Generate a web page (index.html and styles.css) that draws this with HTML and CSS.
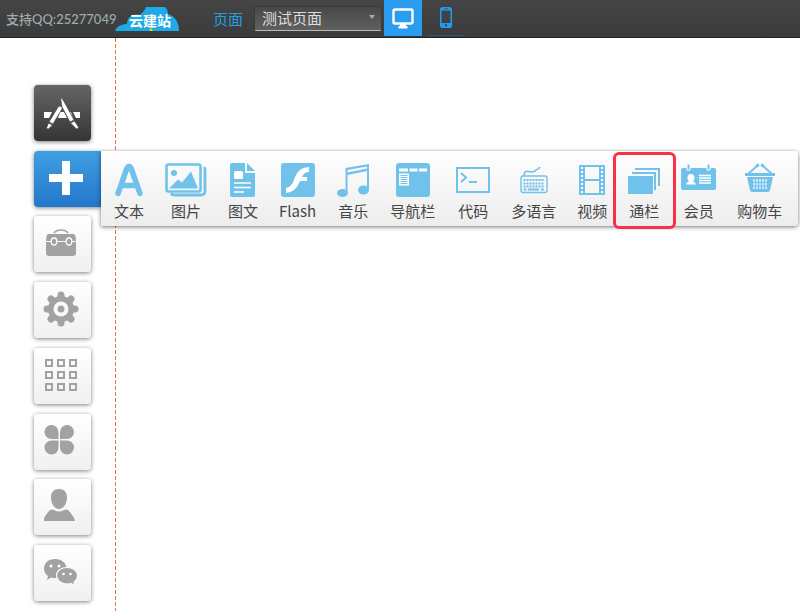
FILE: index.html
```html
<!DOCTYPE html>
<html lang="zh-CN">
<head>
<meta charset="utf-8">
<title>云建站</title>
<link rel="stylesheet" href="styles.css">
</head>
<body>
<header class="topbar">
  <span class="support">支持QQ:25277049</span>
  <a class="logo" href="#">
    <svg class="logo-cloud" viewBox="0 0 64 24" aria-hidden="true"><path fill="#1fa9e6" d="M0 24C2 19 7 17 12 17C12 10 18 6 25 8C28 5 30 3 31 0H50C52 2 53 4 53 7C60 9 64 15 64 24Z"/><path fill="#d8e021" d="M34 24l2-3 2 3z"/></svg>
    <span class="logo-text">云建站</span>
  </a>
  <label class="page-label" for="page">页面</label>
  <div class="select-box">
    <select id="page" class="page-select"><option>测试页面</option></select>
  </div>
  <button class="device device-on" type="button" aria-label="桌面">
    <svg width="22" height="21" viewBox="0 0 22 21"><rect x="1.5" y="1.5" width="19" height="14" rx="1.5" fill="none" stroke="#fff" stroke-width="2.4"/><path fill="#fff" d="M8 16h6v2h1.500v2.500h-9V18H8z"/></svg>
  </button>
  <button class="device" type="button" aria-label="手机">
    <svg width="12" height="21" viewBox="0 0 12 21"><path fill="#1f9df0" fill-rule="evenodd" d="M2.500 0h7Q12 0 12 2.500v16q0 2.500-2.500 2.500h-7Q0 21 0 18.500v-16Q0 0 2.500 0zM1.500 3.500v12.500h9V3.500zM4 1.400v.8h4v-.8zM5 17.300v2h2v-2z"/></svg>
  </button>
</header>
<main class="workspace">
  <nav class="sidebar" aria-label="工具">
    <button class="side side-dark" type="button" aria-label="应用">
      <svg width="36" height="32" viewBox="0 0 36 32"><path fill="#fff" d="M0 14h36v6H0z"/><path fill="#4d4d4d" d="M8 14h4l-4 6H5zM15 14h1l-2 6h-3zM20 14h3l3 6h-3zM27 14h2l3 6h-3z"/><g fill="#fff" stroke="#4d4d4d" stroke-width=".8"><path d="M14 9q2-2 4 0 .500 1 0 2L9 26l-4-2z"/><path d="M4.500 25l4 2-4 4q-2 0-2-1z"/><path d="M16.500 0q1.500 0 2 1l3.500 6 8 15-4 2-8-15z"/><path d="M26.500 25l4-2 4 6q0 2-2 2z"/></g></svg>
    </button>
    <button class="side side-add" type="button" aria-label="添加">
      <svg width="34" height="34" viewBox="0 0 34 34"><path fill="#fff" d="M13 0h8v13h13v8H21v13h-8V21H0v-8h13z"/></svg>
    </button>
    <button class="side" type="button" aria-label="工具箱">
      <svg width="30" height="28" viewBox="0 0 30 28"><path fill="none" stroke="#a2a2a2" stroke-width="1.600" d="M8 4Q10 1 15 1T22 4"/><path fill="#a2a2a2" d="M3 5h24q2 0 2.500 2l.5 5H0l.5-5Q1 5 3 5zM0 13h30v11q0 3-3 3H3q-3 0-3-3z"/><g fill="#a2a2a2" stroke="#fff" stroke-width="1.300"><ellipse cx="8" cy="12.500" rx="2.800" ry="3.500"/><ellipse cx="23" cy="12.500" rx="2.800" ry="3.500"/></g></svg>
    </button>
    <button class="side" type="button" aria-label="设置">
      <svg width="36" height="36" viewBox="-18 -18 36 36"><g stroke="#a2a2a2" stroke-width="7" stroke-linecap="round"><path d="M0-14V14M-14 0H14M-10-10L10 10M10-10L-10 10"/></g><circle r="13" fill="#a2a2a2"/><circle r="7.500" fill="#fafafa"/><circle r="3.500" fill="#a2a2a2"/></svg>
    </button>
    <button class="side" type="button" aria-label="模块">
      <svg width="32" height="32" viewBox="0 0 32 32"><g fill="none" stroke="#a2a2a2" stroke-width="2"><path d="M1 1h6v6H1zM13 1h6v6h-6zM25 1h6v6h-6zM1 13h6v6H1zM13 13h6v6h-6zM25 13h6v6h-6zM1 25h6v6H1zM13 25h6v6h-6zM25 25h6v6h-6z"/></g></svg>
    </button>
    <button class="side" type="button" aria-label="组件">
      <svg width="34" height="32" viewBox="0 0 34 32"><path fill="#a2a2a2" d="M14.500 14H8A7 7 0 1 1 14.500 7zM16 14V7a7 7 0 1 1 6.500 7zM14.500 15.500V22A7 7 0 1 1 8 15.500zM16 15.500h6.500A7 7 0 1 1 16 22z"/></svg>
    </button>
    <button class="side" type="button" aria-label="用户">
      <svg width="36" height="36" viewBox="0 0 36 36"><path fill="#a2a2a2" d="M16 1c5 0 8 3 8 8.500S21 21 16 21 8 15 8 9.500 11 1 16 1zM1 33v-3q3-5 6-8 2-1 4 0 5 3 10 0 2-1 4 0 3 3 6 8l1 3z"/></svg>
    </button>
    <button class="side" type="button" aria-label="微信">
      <svg width="36" height="28" viewBox="0 0 36 28"><path fill="#a2a2a2" d="M12 1c6.500 0 11.500 4 11.500 9.500S18.500 20 12 20q-2 0-4-.5L4 22l1-4Q1 15 1 10.500C1 5 5.500 1 12 1z"/><path fill="#a2a2a2" stroke="#fafafa" stroke-width="1.200" d="M24 9.500c6 0 10.500 3.500 10.500 8 0 3-1.500 5-3.500 6.500l1 3.500-4-2q-2 .500-4 .500c-6 0-10.500-4-10.500-8.500s4.500-8 10.500-8z"/><g fill="#fff"><circle cx="8" cy="8" r="1.500"/><circle cx="16" cy="8" r="1.500"/><circle cx="20.500" cy="16" r="1.300"/><circle cx="27.500" cy="16" r="1.300"/></g></svg>
    </button>
  </nav>
  <section class="canvas">
    <div class="palette">
      <button class="tool" type="button"><svg width="28" height="34" viewBox="0 0 28 34"><path fill="none" stroke="#70c2ea" stroke-width="5.500" stroke-linecap="round" stroke-linejoin="round" d="M3 30.500L12 5Q14 1.500 16 5L25 30.500M7 22.500h14"/></svg>文本</button>
      <button class="tool" type="button"><svg width="42" height="34" viewBox="0 0 42 34"><rect x="1.500" y="1.500" width="34" height="27" rx="2" fill="none" stroke="#70c2ea" stroke-width="2.600"/><path fill="none" stroke="#70c2ea" stroke-width="2.800" d="M38.500 5q1.500 0 1.500 2v21q0 4-4 4H9q-2 0-3-2"/><circle cx="9" cy="10" r="3" fill="#70c2ea"/><path fill="#70c2ea" d="M4 25.500l9-9 4 3 9-11 7 17z"/></svg>图片</button>
      <button class="tool" type="button"><svg width="26" height="34" viewBox="0 0 26 34"><path fill="#70c2ea" d="M2 0h13v10h10v22q0 2-2 2H2q-2 0-2-2V2Q0 0 2 0zM17 0l8 8h-8z"/><rect x="4" y="8" width="9" height="8" rx="1.500" fill="#fff"/><path stroke="#fff" stroke-width="1.600" d="M4 20h17M4 24.500h17M4 29h10"/></svg>图文</button>
      <button class="tool" type="button"><svg width="34" height="34" viewBox="0 0 34 34"><rect width="34" height="34" rx="3" fill="#70c2ea"/><path fill="#fff" d="M28 4v5q-5 0-7 5h5v4h-7Q15 29 5 30v-5q6-.500 9-11Q18 4 28 4z"/></svg>Flash</button>
      <button class="tool" type="button"><svg width="32" height="34" viewBox="0 0 32 34"><path fill="#70c2ea" fill-rule="evenodd" d="M8.500 5L32 1v26h-2V8L10.500 12v18h-2zM10.500 7v2.500L30 5.500V3.500z"/><ellipse cx="5.500" cy="30" rx="5.500" ry="4" fill="#70c2ea"/><ellipse cx="26.500" cy="27" rx="5.500" ry="4.500" fill="#70c2ea"/></svg>音乐</button>
      <button class="tool" type="button"><svg width="34" height="34" viewBox="0 0 34 34"><rect width="34" height="34" rx="3" fill="#70c2ea"/><path fill="#fff" d="M3 5.500h9v3H3zM13.500 5.500h8v3h-8zM23 5.500h8v3h-8zM3 10.500h10v12H3z"/><path stroke="#70c2ea" d="M4.500 12.500h7M4.500 14.500h7M4.500 16.500h7M4.500 18.500h7M4.500 20.500h7"/></svg>导航栏</button>
      <button class="tool" type="button"><svg width="34" height="34" viewBox="0 0 34 34"><rect x="1" y="5" width="32" height="24" fill="none" stroke="#70c2ea" stroke-width="2"/><path fill="none" stroke="#70c2ea" stroke-width="2" d="M5 10l5 4.500L5 19M13 19h8"/></svg>代码</button>
      <button class="tool" type="button"><svg width="28" height="34" viewBox="0 0 28 34"><g fill="none" stroke="#70c2ea"><rect x="1" y="13" width="26" height="16.500" rx="2" stroke-width="1.400"/><path stroke-width="1.600" d="M4 13Q4 7 9 8.500T16 7Q19 6 20 4"/><path stroke-width="1.800" stroke-dasharray="2 1" d="M3.500 17h21M3.500 20.500h21M3.500 23.500h21"/><path stroke-width="1.800" d="M3.500 26.500h3M8 26.500h11M21 26.500h3"/></g></svg>多语言</button>
      <button class="tool" type="button"><svg width="28" height="34" viewBox="0 0 28 34"><path fill="#70c2ea" fill-rule="evenodd" d="M1 2h26v30H1zM7 4v12h14V4zM7 18v12h14V18z"/><path stroke="#fff" stroke-width="2" stroke-dasharray="2 2" d="M4 4v27M24 4v27"/></svg>视频</button>
      <button class="tool tool-marked" type="button"><svg width="32" height="34" viewBox="0 0 32 34"><path fill="#70c2ea" d="M0 13h25v18H0zM4 9h24v18h-2V11H4zM7 5h25v18h-2V7H7z"/></svg>通栏</button>
      <button class="tool" type="button"><svg width="35" height="34" viewBox="0 0 35 34"><path fill="#70c2ea" d="M2 5h31q2 0 2 2v18q0 2-2 2H2q-2 0-2-2V7q0-2 2-2z"/><path fill="#70c2ea" stroke="#fff" d="M6 1h3v6H6zM26 1h3v6h-3z"/><path fill="#fff" d="M10 11q3.500 0 3.500 4 0 2-1.500 3.500 3 1 3 3H5q0-2 3-3-1.500-1.500-1.500-3.500 0-4 3.500-4z"/><path stroke="#fff" stroke-width="1.600" d="M18 12.500h12M18 15h12M18 17.500h12M18 20h12"/></svg>会员</button>
      <button class="tool" type="button"><svg width="32" height="34" viewBox="0 0 32 34"><path fill="none" stroke="#70c2ea" stroke-width="1.800" d="M4 11L13 3M28 11L19 3"/><g fill="#70c2ea"><circle cx="13.500" cy="2.500" r="1.800"/><circle cx="18.500" cy="2.500" r="1.800"/><path d="M1 10h30v3H1zM3 14h26l-3 13q-.500 2-2 2H8q-1.500 0-2-2z"/></g><path stroke="#fff" stroke-width="1.300" d="M10 16v10M13 16v10M16 16v10M19 16v10M22 16v10"/><path stroke="#70c2ea" d="M8 19.500h16M8 23h16"/></svg>购物车</button>
    </div>
  </section>
</main>
</body>
</html>
```
FILE: styles.css
```css
* { box-sizing: border-box; }

body {
  margin: 0;
  min-height: 100vh;
  display: flex;
  flex-direction: column;
  background: #fff;
  font-family: "Noto Sans CJK SC", sans-serif;
}

button {
  margin: 0;
  padding: 0;
  border: 0;
  font: inherit;
  cursor: pointer;
}

svg { display: block; flex: none; }

.topbar {
  display: flex;
  align-items: center;
  height: 38px;
  padding-left: 6px;
  background: linear-gradient(#454545, #3b3b3b);
  border-bottom: 1px solid #222;
}

.support {
  font: 500 13px/20px Lato, "Noto Sans CJK SC", sans-serif;
  color: #9eabb1;
  width: 109px;
  white-space: nowrap;
}

.logo {
  display: grid;
  width: 64px;
  height: 24px;
  text-decoration: none;
}

.logo-cloud, .logo-text { grid-area: 1 / 1; }
.logo-cloud { width: 64px; height: 24px; }

.logo-text {
  align-self: end;
  text-align: center;
  padding: 0 0 2px 6px;
  font: 700 14px/18px "Noto Sans CJK SC", sans-serif;
  color: #fff;
}

.page-label {
  margin: 0 11px 0 34px;
  font-size: 15px;
  line-height: 20px;
  color: #239fe0;
}

.select-box {
  position: relative;
  width: 128px;
}

.select-box::after {
  content: "";
  position: absolute;
  top: 9px;
  right: 7px;
  border: 3px solid transparent;
  border-top: 4px solid #aaa;
  pointer-events: none;
}

.page-select {
  appearance: none;
  display: block;
  width: 100%;
  height: 25px;
  padding: 0 7px 2px;
  border: 1px solid #3a3a3a;
  border-bottom: 1px solid #bbb;
  border-radius: 3px;
  background: linear-gradient(#484848, #606060);
  font: 15px/20px "Noto Sans CJK SC", sans-serif;
  color: #ddd;
}

.device {
  display: flex;
  align-items: center;
  justify-content: center;
  align-self: flex-start;
  width: 38px;
  height: 36px;
  margin-left: 2px;
  background: none;
}

.device + .device { margin-left: 5px; border-bottom: 1px solid #2c5675; }
.device-on { background: #2a9df0; }

.workspace {
  flex: 1;
  display: flex;
}

.sidebar {
  position: relative;
  z-index: 1;
  flex: none;
  display: flex;
  flex-direction: column;
  justify-content: space-between;
  gap: 4px;
  width: 115px;
  padding: 47px 0 10px 34px;
}

.side {
  display: flex;
  align-items: center;
  justify-content: center;
  width: 57px;
  height: 56px;
  padding: 0 3px 2px 0;
  border-radius: 4px;
  background: linear-gradient(#fff, #f0f0f0);
  box-shadow: 0 1px 4px rgba(0, 0, 0, 0.5);
}

.side-dark {
  padding: 2px 1px 0 0;
  background: linear-gradient(#656565, #353535);
}

.side-add {
  width: 67px;
  border-radius: 4px 0 0 4px;
  background: linear-gradient(#409fe2, #2377cb);
}

.canvas {
  flex: 1;
  min-width: 0;
  padding-top: 113px;
  background: repeating-linear-gradient(#ee7430 0 4px, #fff 4px 6px) 0 0 / 1px 100% no-repeat;
}

.palette {
  position: relative;
  z-index: 2;
  display: flex;
  align-items: flex-start;
  gap: 21px;
  width: max-content;
  height: 75px;
  margin-left: -14px;
  padding: 12px 16px 0 13px;
  border-radius: 0 4px 4px 0;
  background: linear-gradient(#fefefe, #ededed);
  box-shadow: 0 1px 4px rgba(0, 0, 0, 0.55);
}

.tool {
  position: relative;
  display: flex;
  flex-direction: column;
  align-items: center;
  gap: 4px;
  background: none;
  font-size: 15px;
  line-height: 20px;
  color: #444;
  white-space: nowrap;
}

.tool-marked::after {
  content: "";
  position: absolute;
  inset: -11px -16px -8px -15px;
  border: 3px solid #fa3048;
  border-radius: 6px;
}
```
